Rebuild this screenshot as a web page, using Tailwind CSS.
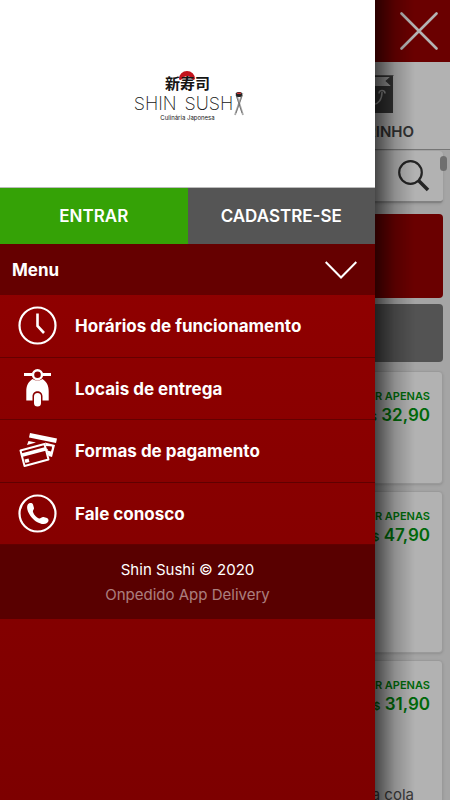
<!DOCTYPE html>
<html lang="pt-BR">
<head>
<meta charset="utf-8">
<meta name="viewport" content="width=device-width, initial-scale=1">
<title>Shin Sushi</title>
<script src="https://cdn.jsdelivr.net/npm/@tailwindcss/browser@4"></script>
</head>
<body class="h-screen overflow-hidden bg-[#ececec] font-['Inter','Liberation_Sans',sans-serif]">

<!-- Store page under the open drawer -->
<div class="h-full overflow-hidden">
  <header class="h-[62px] bg-[#990000]"></header>
  <nav class="flex h-[88px] justify-end border-b border-[#aaa] bg-white pr-9">
    <a href="#" class="flex flex-col items-center pt-3 text-[15px] leading-5 font-semibold text-[#484848]">
      <svg class="mb-2 h-10 w-11" viewBox="0 0 44 40" aria-hidden="true">
        <path d="M5 2H41V39H5Z" fill="#4c4c4c"/>
        <path d="M5 3H39L35 7L39 12H5Z" fill="#e4e4e4"/>
        <path d="M5 2H40L34.500 7L40 12" fill="none" stroke="#4c4c4c" stroke-width="1.500"/>
        <path d="M14 18V21C14 34 30 34 30 18M27 19.500A3 3 0 0 1 33 19.500" fill="none" stroke="#ddd" stroke-width="1.500"/>
      </svg>
      CARRINHO
    </a>
  </nav>
  <main class="flex flex-col px-[7px] pt-px">
    <form class="flex h-[52px] items-center justify-end rounded-sm border-b-2 border-[#bbb] bg-white pr-[13px] shadow">
      <input type="search" aria-label="Buscar produto" class="h-full min-w-0 flex-1 outline-none">
      <button type="button" aria-label="Buscar">
        <svg class="size-8" viewBox="0 0 32 32" fill="none" stroke="#343434" aria-hidden="true">
          <circle cx="12.500" cy="12.500" r="11.300" stroke-width="2.200"/>
          <path d="M20.500 20.500L30 30" stroke-width="3.500"/>
        </svg>
      </button>
    </form>
    <div class="mt-[11px] h-[84px] rounded bg-[#990000]"></div>
    <div class="mt-1.5 h-[58px] rounded bg-[#777]"></div>
    <article class="mt-[9px] h-[113px] rounded border border-[#ddd] bg-white px-3 pt-4 text-right font-semibold text-[#00970e] shadow-sm">
      <p class="text-[11px] leading-4">POR APENAS</p>
      <p class="text-[17px] leading-[22px]"><small class="text-[11px]">R$</small> 32,90</p>
    </article>
    <article class="mt-[7px] h-[162px] rounded border border-[#ddd] bg-white px-3 pt-4 text-right font-semibold text-[#00970e] shadow-sm">
      <p class="text-[11px] leading-4">POR APENAS</p>
      <p class="text-[17px] leading-[22px]"><small class="text-[11px]">R$</small> 47,90</p>
    </article>
    <article class="mt-[7px] h-[162px] rounded border border-[#ddd] bg-white px-3 pt-4 text-right font-semibold text-[#00970e] shadow-sm">
      <p class="text-[11px] leading-4">POR APENAS</p>
      <p class="text-[17px] leading-[22px]"><small class="text-[11px]">R$</small> 31,90</p>
      <p class="mt-[66px] pr-4 text-[15px] leading-6 font-normal text-[#555]">Coca cola</p>
    </article>
  </main>
</div>
<span class="fixed top-[156px] right-[3px] h-[15px] w-[7px] rounded-full bg-[#a0a0a0]"></span>

<div class="fixed inset-0 bg-black/30"></div>
<button type="button" aria-label="Fechar menu" class="fixed top-3 right-3">
  <svg class="size-[38px]" viewBox="0 0 38 38" fill="none" stroke="#b3b3b3" stroke-width="2.600" stroke-linecap="round" aria-hidden="true"><path d="M1.500 1.500L36.500 36.500M36.500 1.500L1.500 36.500"/></svg>
</button>
<div class="fixed inset-y-0 left-[83.333%] w-10 bg-linear-to-r from-black/60 via-black/20 to-transparent"></div>

<!-- Drawer -->
<aside class="fixed inset-y-0 left-0 flex w-5/6 flex-col bg-linear-to-b from-[#990000] to-[#7d0000] text-white">
  <div class="flex h-[188px] flex-col items-center border-b border-[#bbb] bg-white pt-[69px] text-[#151515]">
    <div class="relative h-6">
      <svg class="absolute top-0 left-1/2 h-3 w-[18px] -translate-x-1/2" viewBox="0 0 18 12" aria-hidden="true"><path d="M1 10A8 8 0 1 1 17 10Q15 12 14 10Q9 4 4 10Q2 12 1 10Z" fill="#c3131d"/></svg>
      <p class="relative pt-1 font-['Noto_Sans_CJK_JP',sans-serif] text-[15px] leading-5 font-bold">新寿司</p>
    </div>
    <div class="flex h-[22px] items-center gap-2 pl-1 text-lg leading-[22px] font-extralight">
      <span>SHIN</span>
      <span class="flex items-center">SUSH
        <svg class="h-6 w-3" viewBox="0 0 12 24" fill="none" aria-hidden="true">
          <path d="M3 1L10 23M9.500 1L2 23" stroke="#aaa" stroke-width="1.800"/>
          <path d="M3 3L9 21M9.500 3L3 21" stroke="#555" stroke-width=".6"/>
          <rect x="3" y="0" width="6" height="5" rx="2" fill="#222"/>
          <path d="M4 1.300H8" stroke="#d33" stroke-width="1.300"/>
        </svg>
      </span>
    </div>
    <p class="text-[6px] leading-[6px]">Culinária Japonesa</p>
  </div>

  <div class="grid h-14 grid-cols-2 text-[17px] font-semibold">
    <a href="#" class="flex items-center justify-center bg-[#35a206] pt-0.5">ENTRAR</a>
    <a href="#" class="flex items-center justify-center bg-[#555] pt-0.5">CADASTRE-SE</a>
  </div>

  <button type="button" class="flex h-[51px] items-center justify-between bg-[#650000] pr-[18px] pl-3 text-[17px] font-bold">
    <span class="pt-0.5">Menu</span>
    <svg class="h-[18px] w-8" viewBox="0 0 32 18" fill="none" stroke="#fff" stroke-width="2" aria-hidden="true"><path d="M.7 1L16 16.500L31.300 1"/></svg>
  </button>

  <ul class="grid h-[250px] grid-rows-4 text-[17px] font-bold">
    <li class="border-b border-[#650000]">
      <a href="#" class="flex h-full items-center gap-[18px] pl-[18px]">
        <svg class="size-[39px]" viewBox="0 0 39 39" fill="none" stroke="#fff" stroke-width="2.200" aria-hidden="true"><circle cx="19.500" cy="19.500" r="18"/><path d="M19.500 7.500V20L26 27" stroke-width="2.600"/></svg>
        <span class="pt-0.5">Horários de funcionamento</span>
      </a>
    </li>
    <li class="border-b border-[#650000]">
      <a href="#" class="flex h-full items-center gap-[18px] pl-[18px]">
        <svg class="size-[39px]" viewBox="0 0 39 39" aria-hidden="true">
          <path d="M6 5.500H14M25 5.500H33" stroke="#fff" stroke-width="3"/>
          <circle cx="19.500" cy="5.700" r="4.500" fill="none" stroke="#fff" stroke-width="2.400"/>
          <path d="M14.500 10Q19.500 13 24.500 10C29 13 30.700 17 30.700 22V31.500H24.500V27.500C24.500 20.500 14.500 20.500 14.500 27.500V31.500H8.300V22C8.300 17 10 13 14.500 10Z" fill="#fff"/>
          <rect x="16" y="24" width="7" height="13.500" rx="3.500" fill="#fff"/>
        </svg>
        <span class="pt-0.5">Locais de entrega</span>
      </a>
    </li>
    <li class="border-b border-[#600000]">
      <a href="#" class="flex h-full items-center gap-[18px] pl-[18px]">
        <svg class="size-[39px]" viewBox="0 0 39 39" aria-hidden="true">
          <path d="M12 2L39 7.500L38 12L11 6.500Z" fill="#fff"/>
          <path d="M10.500 10L18 11.500L9 14ZM27 11.500L37 14L34 26L30.500 25L28 17.500L33 19L34 15.500L28 15Z" fill="#fff"/>
          <path d="M30.500 15.500L34 16.500L33 20.500L29.500 19.500Z" fill="#800000"/>
          <path d="M2.500 19.500L26.500 13L30.500 28.500L6.500 35Z" fill="none" stroke="#fff" stroke-width="2" stroke-linejoin="round"/>
          <path d="M3 22.500L27.500 16L28.500 19.500L4 26Z" fill="#fff"/>
          <path d="M6.500 28.500L10.500 27.500L11.500 31L7.500 32Z" fill="#fff"/>
        </svg>
        <span class="pt-0.5">Formas de pagamento</span>
      </a>
    </li>
    <li class="border-b border-[#600000]">
      <a href="#" class="flex h-full items-center gap-[18px] pl-[18px]">
        <svg class="size-[39px]" viewBox="0 0 39 39" aria-hidden="true">
          <circle cx="19.500" cy="19.500" r="18" fill="none" stroke="#fff" stroke-width="2.200"/>
          <path d="M9.500 11C11 8.500 14 8.500 15 10.500L16 14C16.300 15.500 14.500 16.500 15 18C16 21 18.500 23.500 21 24.500C22.500 25 23.500 22.800 25.500 23L29 24C31 25 31 27.500 29 29C26.500 31 22 30 18 27.500C13 24 7.500 16 9.500 11Z" fill="#fff"/>
        </svg>
        <span class="pt-0.5">Fale conosco</span>
      </a>
    </li>
  </ul>

  <footer class="flex h-[74px] flex-col justify-center bg-[#590000] text-center text-[15px] leading-[25px]">
    <p>Shin Sushi © 2020</p>
    <a href="#" class="text-white/50">Onpedido App Delivery</a>
  </footer>
</aside>
</body>
</html>
